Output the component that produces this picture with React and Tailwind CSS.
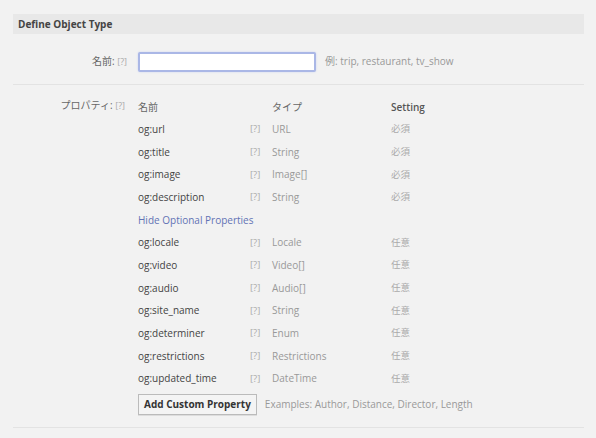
import React from "react";

const required = [
  ["og:url", "URL"],
  ["og:title", "String"],
  ["og:image", "Image[]"],
  ["og:description", "String"],
];
const optional = [
  ["og:locale", "Locale"],
  ["og:video", "Video[]"],
  ["og:audio", "Audio[]"],
  ["og:site_name", "String"],
  ["og:determiner", "Enum"],
  ["og:restrictions", "Restrictions"],
  ["og:updated_time", "DateTime"],
];

function Row({ name, type, setting }) {
  return (
    <div className="flex h-[22.7px] items-center">
      <div className="w-[112px] text-[#444]">{name}</div>
      <div className="w-[22px] text-[#aaa] text-[9.5px]">[?]</div>
      <div className="w-[119px] text-[#999]">{type}</div>
      <div className="text-[#aaa] text-[9.5px]">{setting}</div>
    </div>
  );
}

export default function App() {
  return (
    <div
      className="w-[596px] h-[438px] bg-[#f2f2f2] text-[10px] overflow-hidden"
      style={{ fontFamily: '"Open Sans", "Noto Sans CJK JP", sans-serif' }}
    >
      <div className="px-[13px] pt-[14px]">
        <div className="w-[571px] h-[20px] bg-[#e8e8e8] flex items-center pl-[5px] pt-[1px] font-bold text-[#444]">
          Define Object Type
        </div>

        <div className="flex items-center h-[51px] pt-[5px] border-b border-[#e3e3e3] w-[571px]">
          <div className="w-[114px] text-right text-[#666]">
            名前: <span className="text-[#aaa] text-[9px]">[?]</span>
          </div>
          <div className="ml-[11px] w-[178px] h-[20px] bg-white border-2 border-[#aab7e6] rounded-[2px] shadow-[0_0_2px_#c9d2f2]" />
          <div className="ml-[9px] text-[#999]">例: trip, restaurant, tv_show</div>
        </div>

        <div className="flex w-[571px] border-b border-[#e3e3e3] pt-[11px] pb-[12px]">
          <div className="w-[112px] text-right text-[#666] pt-[2px]">
            プロパティ: <span className="text-[#aaa] text-[9px]">[?]</span>
          </div>
          <div className="ml-[13px] flex flex-col">
            <div className="flex h-[22px] items-center">
              <div className="w-[134px] text-[#666]">名前</div>
              <div className="w-[119px] text-[#666]">タイプ</div>
              <div className="font-semibold text-[#555]">Setting</div>
            </div>
            {required.map(([n, t]) => (
              <Row key={n} name={n} type={t} setting="必須" />
            ))}
            <div className="flex h-[22.7px] items-center text-[#6272b5]">Hide Optional Properties</div>
            {optional.map(([n, t]) => (
              <Row key={n} name={n} type={t} setting="任意" />
            ))}
            <div className="flex items-center mt-[4px]">
              <button className="h-[21px] px-[5px] bg-[#f4f4f4] border border-[#bbb] shadow-[0_1px_0_#ddd] font-bold text-[#333] text-[10px]">
                Add Custom Property
              </button>
              <span className="ml-[8px] text-[#999]">Examples: Author, Distance, Director, Length</span>
            </div>
          </div>
        </div>
      </div>
    </div>
  );
}
